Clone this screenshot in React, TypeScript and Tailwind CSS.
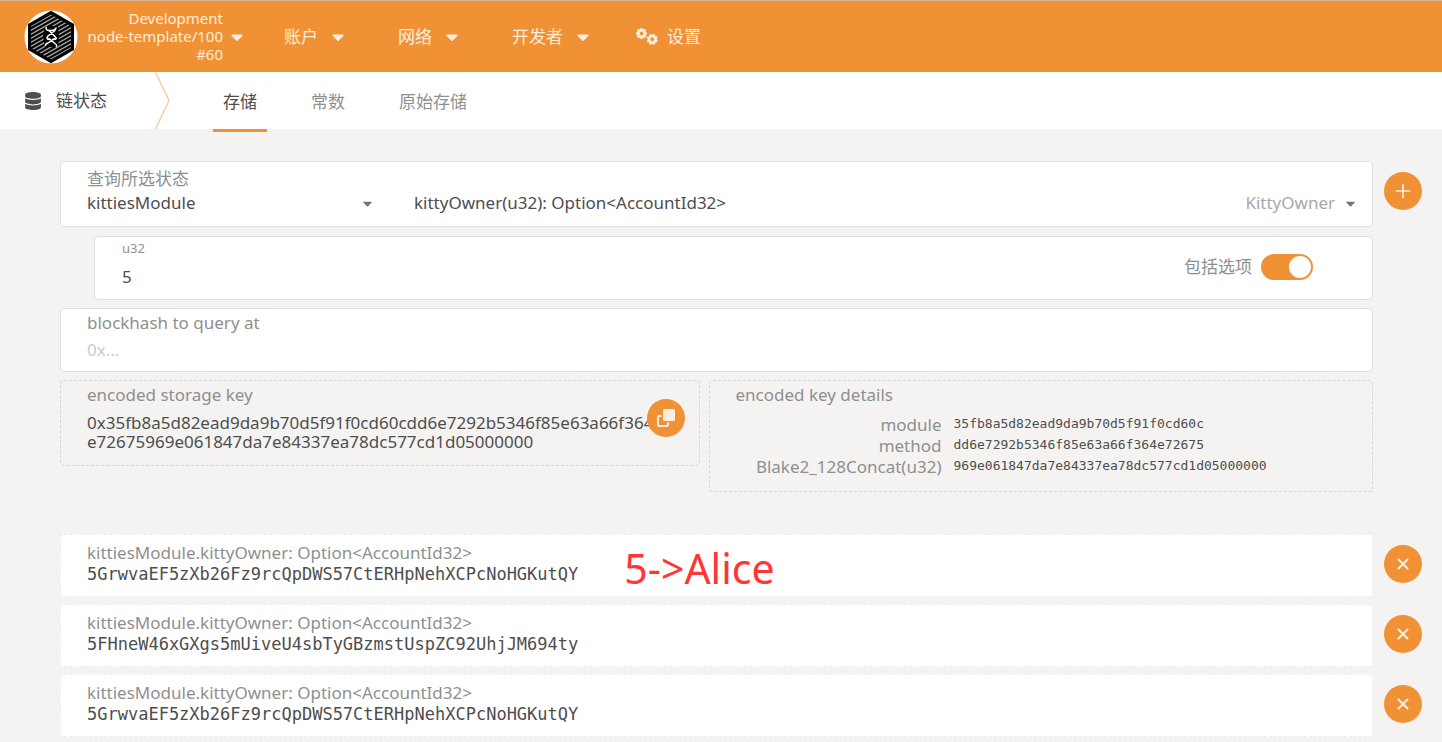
import { useState } from "react";
import type { ReactNode } from "react";
import { FaCaretDown, FaDatabase } from "react-icons/fa";

const STORAGE_KEY =
  "0x35fb8a5d82ead9da9b70d5f91f0cd60cdd6e7292b5346f85e63a66f364e72675969e061847da7e84337ea78dc577cd1d05000000";

const KEY_DETAILS = [
  { name: "module", value: "35fb8a5d82ead9da9b70d5f91f0cd60c" },
  { name: "method", value: "dd6e7292b5346f85e63a66f364e72675" },
  { name: "Blake2_128Concat(u32)", value: "969e061847da7e84337ea78dc577cd1d05000000" },
];

const RESULTS = [
  { id: 3, value: "5GrwvaEF5zXb26Fz9rcQpDWS57CtERHpNehXCPcNoHGKutQY", note: "5->Alice" },
  { id: 2, value: "5FHneW46xGXgs5mUiveU4sbTyGBzmstUspZC92UhjJM694ty", note: "" },
  { id: 1, value: "5GrwvaEF5zXb26Fz9rcQpDWS57CtERHpNehXCPcNoHGKutQY", note: "" },
];

function Logo() {
  const stripes = [-22, -18, -14, -10, -6, -2, 2, 6, 10, 14, 18, 22];
  return (
    <svg viewBox="0 0 54 54" className="size-[54px] shrink-0" aria-hidden="true">
      <defs>
        <clipPath id="hex">
          <path d="M27 4.500 47 16v22L27 49.500 7 38V16z" />
        </clipPath>
      </defs>
      <circle cx="27" cy="27" r="26.500" fill="#fff" />
      <path d="M27 .8 50 14v26L27 53.200 4 40V14z" fill="#050505" />
      <g clipPath="url(#hex)" stroke="#a6a6a6" strokeWidth="1.400">
        {stripes.map((y) => (
          <path key={y} d={`M2 ${y + 41} 52 ${y + 13}`} />
        ))}
      </g>
      <path d="M21 16h13l1 10-1 11H21l-2-11z" fill="#050505" />
      <g fill="none" stroke="#fff" strokeWidth="1.500" strokeLinecap="round" strokeLinejoin="round">
        <path d="M22 17c-.5 3.500 2 3.500 5.500 3.500 3 0 4-1 4.500-2.500" />
        <path d="M25 20.500 31 26.500c2 2 2 3-2 3M31 20.500 24 26c-2 2-1 3.500 2 3.500" />
        <path d="M25 28.500 31 33.500c1.500 1 2 2 1.500 3M30.500 28.500 24 33c-2 .500-2.500 1-2.500 2.500" />
      </g>
    </svg>
  );
}

const TEETH = [0, 45, 90, 135, 180, 225, 270, 315];

function Gear({ x, y, turn }: { x: number; y: number; turn: number }) {
  return (
    <g transform={`translate(${x} ${y}) rotate(${turn})`}>
      <circle r="3.200" fill="none" stroke="currentColor" strokeWidth="2.600" />
      {TEETH.map((angle) => (
        <rect key={angle} x="-1.200" y="-5.500" width="2.400" height="2" fill="currentColor" transform={`rotate(${angle})`} />
      ))}
    </g>
  );
}

function Cogs() {
  return (
    <svg viewBox="0 0 22 18" className="h-[18px] w-[22px]" aria-hidden="true">
      <Gear x={5.5} y={5.5} turn={0} />
      <Gear x={16.2} y={11.3} turn={22} />
    </svg>
  );
}

function CopyIcon() {
  return (
    <svg viewBox="0 0 18 18" className="size-[18px]" aria-hidden="true">
      <path d="M4.500 7H2.200Q1 7 1 8.200V15.800Q1 17 2.200 17H9.800Q11 17 11 15.800V13.500" fill="none" stroke="#fdeede" strokeWidth="2" />
      <rect x="6" y="0" width="12" height="12" rx="1.500" fill="#fdeede" />
    </svg>
  );
}

function RoundButton({ label, children, onClick }: { label: string; children: ReactNode; onClick?: () => void }) {
  return (
    <button
      type="button"
      aria-label={label}
      onClick={onClick}
      className="flex size-[38px] shrink-0 items-center justify-center rounded-full bg-[#f19135] text-[#fdeede]"
    >
      {children}
    </button>
  );
}

function Cross() {
  return (
    <svg viewBox="0 0 12 12" className="size-3" fill="none" stroke="currentColor" strokeWidth="2" strokeLinecap="round" aria-hidden="true">
      <path d="M1.500 1.500l9 9M10.500 1.500l-9 9" />
    </svg>
  );
}

function Plus() {
  return (
    <svg viewBox="0 0 16 16" className="size-4" fill="none" stroke="currentColor" strokeWidth="1.700" strokeLinecap="round" aria-hidden="true">
      <path d="M8 1.500v13M1.500 8h13" />
    </svg>
  );
}

function MenuItem({ children }: { children: string }) {
  return (
    <button type="button" className="flex items-center gap-[14px]">
      <span>{children}</span>
      <FaCaretDown className="h-5 w-3" />
    </button>
  );
}

export default function App() {
  const [results, setResults] = useState(RESULTS);
  const remove = (id: number) => setResults((list) => list.filter((r) => r.id !== id));

  return (
    <div className="min-h-screen bg-[#f4f3f1] font-['Noto_Sans','Noto_Sans_CJK_SC',sans-serif] text-[17px] leading-5 text-[#4e4e4e]">
      <header className="flex h-[72px] items-center border-t border-[#d0b394] bg-[#f19135] pl-6 text-[#fdeede]">
        <button type="button" className="flex w-[220px] items-center">
          <Logo />
          <span className="w-[145px] pb-[2px] text-right text-[15px] leading-[18px] whitespace-nowrap">
            Development
            <br />
            node-template/100
            <br />
            #60
          </span>
          <FaCaretDown className="ml-2 h-5 w-3" />
        </button>
        <div className="flex items-center gap-[47px] pl-10">
          <nav className="flex items-center gap-[54px]">
            <MenuItem>账户</MenuItem>
            <MenuItem>网络</MenuItem>
            <MenuItem>开发者</MenuItem>
          </nav>
          <a href="#settings" className="flex items-center gap-[9px]">
            <Cogs />
            设置
          </a>
        </div>
      </header>

      <div className="flex h-[57px] bg-white">
        <h1 className="flex w-[155px] items-center gap-[14px] pl-6">
          <FaDatabase className="size-[18px]" />
          链状态
        </h1>
        <svg viewBox="0 0 15 57" className="h-[57px] w-[15px]" fill="none" stroke="#f8c899" strokeWidth="1.300" aria-hidden="true">
          <path d="M.5 0 14 28.500 .5 57" />
        </svg>
        <nav className="flex pl-[43px] text-[#8f8f8f]">
          <a href="#storage" className="-mb-[3px] flex items-center border-b-3 border-[#f19135] px-[10px] pt-[3px] text-[#4e4e4e]">
            存储
          </a>
          <a href="#constants" className="flex items-center px-11 pt-[2px]">
            常数
          </a>
          <a href="#raw" className="flex items-center px-[10px] pt-[2px]">
            原始存储
          </a>
        </nav>
      </div>

      <main className="pt-8 pr-5 pl-[60px]">
        <div className="flex items-start gap-[11px]">
          <div className="min-w-0 flex-1">
            <section className="flex h-[66px] items-start rounded border border-[#e0e0e0] bg-white pr-[14px] pl-[26px]">
              <button type="button" className="w-[288px] pt-[7px] text-left">
                <span className="block text-[#8f8f8f]">查询所选状态</span>
                <span className="flex items-center justify-between pt-1">
                  kittiesModule
                  <FaCaretDown className="size-[15px] text-[#767676]" />
                </span>
              </button>
              <button type="button" className="flex flex-1 items-center gap-2 pt-[31px] pl-[39px]">
                <span className="flex-1 text-left">kittyOwner(u32): Option&lt;AccountId32&gt;</span>
                <span className="text-[#a8a8a8]">KittyOwner</span>
                <FaCaretDown className="size-[15px] text-[#767676]" />
              </button>
            </section>
            <section className="mt-[9px] ml-[34px] flex h-16 items-center rounded border border-[#e0e0e0] bg-white pr-[59px] pl-[27px]">
              <label className="flex-1 self-start pt-[3px]">
                <span className="block text-[13px] leading-4 text-[#8f8f8f]">u32</span>
                <input type="text" defaultValue="5" className="mt-[11px] block h-5 w-full outline-none" />
              </label>
              <label className="flex items-center gap-[9px] pb-[2px] text-[#8f8f8f]">
                包括选项
                <input
                  type="checkbox"
                  defaultChecked
                  className="h-[26px] w-[52px] appearance-none rounded-full bg-[#ccc] p-[2px] before:block before:size-[22px] before:rounded-full before:bg-white checked:bg-[#f19135] checked:before:ml-[26px]"
                />
              </label>
            </section>
            <section className="mt-2 h-16 rounded border border-[#e0e0e0] bg-white px-[26px] pt-1">
              <label>
                <span className="block text-[#8f8f8f]">blockhash to query at</span>
                <input type="text" placeholder="0x..." className="mt-[7px] block h-5 w-full outline-none placeholder:text-[#cbcbcb]" />
              </label>
            </section>
            <div className="mt-2 grid grid-cols-[640fr_665fr] items-start gap-[9px]">
              <section className="flex h-[86px] rounded border border-dashed border-[#d8d7d5] pt-1 pr-[14px] pl-[26px]">
                <div className="min-w-0 flex-1">
                  <h2 className="text-[#8f8f8f]">encoded storage key</h2>
                  <p className="-mr-[14px] pt-[8px] leading-[19px] break-all">{STORAGE_KEY}</p>
                </div>
                <div className="relative pt-[14px]">
                  <RoundButton label="copy">
                    <CopyIcon />
                  </RoundButton>
                </div>
              </section>
              <section className="h-[112px] rounded border border-dashed border-[#d8d7d5] px-[26px] pt-1">
                <h2 className="text-[#8f8f8f]">encoded key details</h2>
                <table className="mt-[9px]">
                  <tbody>
                    {KEY_DETAILS.map((row) => (
                      <tr key={row.name} className="h-[21px]">
                        <th scope="row" className="w-[206px] p-0 text-right font-normal text-[#8f8f8f]">
                          {row.name}
                        </th>
                        <td className="p-0 pb-[2px] pl-3 font-['DejaVu_Sans_Mono',monospace] text-[13px] leading-4">{row.value}</td>
                      </tr>
                    ))}
                  </tbody>
                </table>
              </section>
            </div>
          </div>
          <div className="pt-[11px]">
            <RoundButton label="add">
              <Plus />
            </RoundButton>
          </div>
        </div>

        <ul className="mt-[42px] flex flex-col gap-[7px]">
          {results.map((r) => (
            <li key={r.id} className="flex items-start gap-[11px]">
              <div className="flex h-[63px] min-w-0 flex-1 items-center gap-[46px] rounded border border-dashed border-[#eeedeb] bg-white pl-[26px]">
                <div className="pb-[5px]">
                  <p className="leading-[22px] text-[#8f8f8f]">kittiesModule.kittyOwner: Option&lt;AccountId32&gt;</p>
                  <p className="font-['DejaVu_Sans_Mono',monospace]">{r.value}</p>
                </div>
                {r.note && (
                  <span className="pt-1 font-['Noto_Sans',sans-serif] text-[41px] leading-[50px] text-[#ff3636]">{r.note}</span>
                )}
              </div>
              <div className="pt-[11px]">
                <RoundButton label="remove" onClick={() => remove(r.id)}>
                  <Cross />
                </RoundButton>
              </div>
            </li>
          ))}
        </ul>
      </main>
    </div>
  );
}
